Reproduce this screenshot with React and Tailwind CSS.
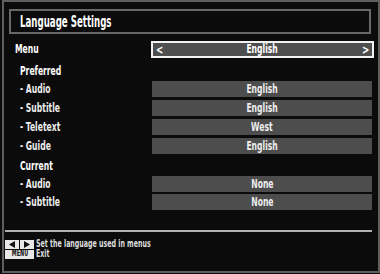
import React from "react";

const font = { fontFamily: '"DejaVu Sans Condensed", "DejaVu Sans", sans-serif' };

function T({ children, className = "" }) {
  return <span className={"inline-block whitespace-nowrap scale-x-[0.68] origin-left " + className}>{children}</span>;
}
function C({ children }) {
  return <span className="inline-block whitespace-nowrap scale-x-[0.68] origin-center">{children}</span>;
}

function ValueRow({ label, value }) {
  return (
    <div className="flex items-center h-[16px]">
      <div className="w-[148px] pl-[16px] text-[12.5px] font-bold text-[#eeeeee] leading-none"><T>{label}</T></div>
      <div className="w-[220px] h-[16px] bg-[#4d4d4d] flex items-center justify-center text-[12.5px] font-bold text-[#eeeeee] leading-none">
        <C>{value}</C>
      </div>
    </div>
  );
}

export default function App() {
  return (
    <div className="w-[380px] h-[274px] bg-[#0b0b0b] relative overflow-hidden" style={font}>
      <div className="ml-[2px] w-[378px] h-[273px] border-2 border-[#5e5e5e] flex flex-col">
        {/* Title */}
        <div className="ml-[5px] mt-[7px] w-[362px] h-[25px] border-2 border-[#686868] flex items-center pl-[9px]">
          <span className="text-[16px] font-bold text-white leading-none"><span className="inline-block whitespace-nowrap scale-x-[0.6] origin-left">Language Settings</span></span>
        </div>

        {/* Menu row */}
        <div className="flex items-center mt-[7px] h-[17px]">
          <div className="w-[147px] pl-[11px] text-[12.5px] font-bold text-white leading-none"><T>Menu</T></div>
          <div className="w-[223px] h-[17px] border-2 border-[#f2f2f2] bg-[#4f4f4f] flex items-center justify-between px-[2px] text-[12px] font-bold text-white leading-none">
            <span className="inline-block scale-x-[0.8]">&lt;</span>
            <span className="text-[12.5px]"><C>English</C></span>
            <span className="inline-block scale-x-[0.8]">&gt;</span>
          </div>
        </div>

        <div className="mt-[6px] h-[14px] pl-[16px] flex items-center text-[12.5px] font-bold text-white leading-none"><T>Preferred</T></div>

        <div className="mt-[3px] flex flex-col gap-[3px]">
          <ValueRow label="- Audio" value="English" />
          <ValueRow label="- Subtitle" value="English" />
          <ValueRow label="- Teletext" value="West" />
          <ValueRow label="- Guide" value="English" />
        </div>

        <div className="mt-[5px] h-[14px] pl-[16px] flex items-center text-[12.5px] font-bold text-white leading-none"><T>Current</T></div>

        <div className="mt-[3px] flex flex-col gap-[2px]">
          <ValueRow label="- Audio" value="None" />
          <ValueRow label="- Subtitle" value="None" />
        </div>

        {/* Separator */}
        <div className="mt-[20px] ml-[1px] w-[367px] h-[2px] bg-[#b0b0b0]" />

        {/* Footer */}
        <div className="mt-[7px] ml-[1px] flex flex-col">
          <div className="flex items-center h-[10px] gap-[2px]">
            <div className="flex gap-[1px]">
              <div className="w-[14px] h-[9px] bg-[#e8e8e8] flex items-center justify-center">
                <svg width="6" height="7" viewBox="0 0 6 7"><path d="M6 0 L0 3.5 L6 7 Z" fill="#111" /></svg>
              </div>
              <div className="w-[14px] h-[9px] bg-[#e8e8e8] flex items-center justify-center">
                <svg width="6" height="7" viewBox="0 0 6 7"><path d="M0 0 L6 3.5 L0 7 Z" fill="#111" /></svg>
              </div>
            </div>
            <span className="text-[10px] font-bold text-[#dddddd] leading-[10px]"><span className="inline-block whitespace-nowrap scale-x-[0.7] origin-left">Set the language used in menus</span></span>
          </div>
          <div className="flex items-center h-[10px] gap-[2px]">
            <div className="w-[29px] h-[9px] bg-[#e8e8e8] flex items-center justify-center text-[8px] font-bold text-[#111] leading-none"><C>MENU</C></div>
            <span className="text-[10px] font-bold text-[#dddddd] leading-[10px]"><span className="inline-block whitespace-nowrap scale-x-[0.7] origin-left">Exit</span></span>
          </div>
        </div>
      </div>
    </div>
  );
}
